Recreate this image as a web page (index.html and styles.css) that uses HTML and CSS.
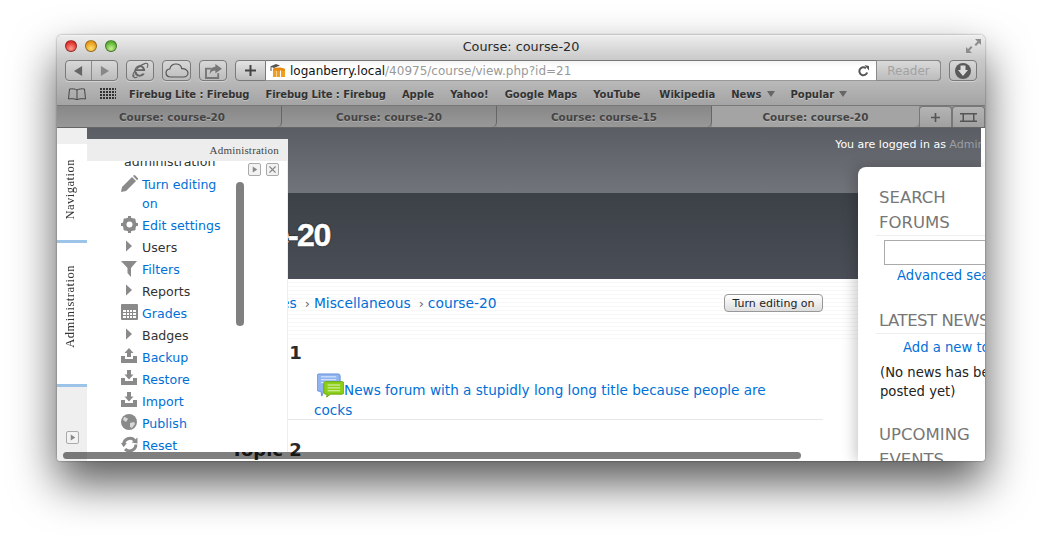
FILE: index.html
```html
<!DOCTYPE html>
<html lang="en">
<head>
<meta charset="utf-8">
<title>Course: course-20</title>
<link rel="stylesheet" href="styles.css">
</head>
<body>
<div class="window">
  <div class="chrome">
    <div class="titlebar">
      <div class="lights"><span class="light red"></span><span class="light amber"></span><span class="light green"></span></div>
      <div class="title">Course: course-20</div>
      <svg class="fullscreen" width="15" height="14" viewBox="0 0 15 14"><path d="M9 0h6v6l-2-2-3 3-1.500-1.500 3-3zM6 14H0V8l2 2 3-3 1.500 1.500-3 3z" fill="#8d8d8d"/></svg>
    </div>
    <div class="toolbar">
      <div class="btn backfwd">
        <span class="seg"><svg width="9" height="10" viewBox="0 0 10 11"><path d="M9 0v11L0 5.500z" fill="#666"/></svg></span>
        <span class="seg"><svg width="9" height="10" viewBox="0 0 10 11"><path d="M1 0v11l9-5.500z" fill="#888"/></svg></span>
      </div>
      <div class="btn ie"><svg width="19" height="17" viewBox="0 0 20 18"><path d="M4.500 9.500h10.500c0-3.500-2.500-6-5.500-6-3.300 0-6 2.800-6 6.500 0 3.300 2.500 5.500 5.700 5.500 2.500 0 4.300-1.200 5.300-3.200h-2.800c-.6.900-1.500 1.400-2.500 1.400-1.600 0-3.200-1.300-3.200-3zM5 7.700c.4-1.400 2.200-2.500 4.300-2.500 1.800 0 2.900 1.100 3.100 2.500z" fill="#666"/><path d="M2 15.500C.8 11.500 9 3 15 1.500c3-.7 3.500 1.500 2 4.500M3.200 13.500c-1.500 3 .8 3.800 3.600 2.300" fill="none" stroke="#666" stroke-width="1.200"/></svg></div>
      <div class="btn cloud"><svg width="24" height="15" viewBox="0 0 24 15"><path d="M6 14C2.500 14 1 11.800 1 9.700 1 7.500 2.800 6 4.800 6 5.500 3 8 1 11 1c3 0 5.200 2 5.800 4.600C20 5.400 23 7.300 23 10c0 2.300-2 4-4.500 4z" fill="none" stroke="#555" stroke-width="1.200"/></svg></div>
      <div class="btn share"><svg width="19" height="16" viewBox="0 0 20 17"><path d="M1 5h7v2H3v8h11v-4h2v6H1z" fill="#777"/><path d="M12 1l7 5-7 5V8C9 8 7.500 9 6 12c0-5 2-7.500 6-8z" fill="#777"/></svg></div>
      <div class="addressgroup">
        <div class="plus"><svg width="11" height="11" viewBox="0 0 11 11"><path d="M4.500 0h2v4.500H11v2H6.500V11h-2V6.500H0v-2h4.500z" fill="#444"/></svg></div>
        <div class="address">
          <svg class="favicon" width="16" height="15" viewBox="0 0 16 15"><path d="M3 6h3.500v8H3zM7 6h3v8H7zM11 6.500h4V14h-4z" fill="#f0a020"/><path d="M3 5.500c4-1.500 9-1.500 12 .5v2h-2.500V7.500H10V8H6.500V7.500H3z" fill="#e88a10"/><path d="M0 3.500L6 1l4 1.500L4 5z" fill="#555"/><path d="M1 4v4" stroke="#555"/></svg>
          <span class="host">loganberry.local</span><span class="path">/40975/course/view.php?id=21</span>
          <svg class="reload" width="11" height="12" viewBox="0 0 11 12"><path d="M9.200 7.500A4 4 0 1 1 8 3.200" fill="none" stroke="#555" stroke-width="2"/><path d="M6.500 0L11 1v4.500z" fill="#555"/></svg>
          <span class="reader">Reader</span>
        </div>
      </div>
      <div class="btn download"><svg width="18" height="18" viewBox="0 0 18 18"><circle cx="9" cy="9" r="8" fill="#5a5a5a"/><path d="M6.500 3.500h5V8H14l-5 6-5-6h2.500z" fill="#dcdcdc"/></svg></div>
    </div>
    <div class="bookmarks">
      <svg class="book" width="18" height="12" viewBox="0 0 18 12"><path d="M9 2C7 .8 4 .6 1.500 1L.5 11c3-.5 6-.4 8.500 .7 2.500-1.100 5.500-1.200 8.500-.7l-1-10C14 .6 11 .8 9 2zM9 2v9.500" fill="none" stroke="#444"/></svg>
      <span class="grid"></span>
      <a class="bm first tight">Firebug Lite : Firebug</a>
      <a class="bm tight">Firebug Lite : Firebug</a>
      <a class="bm">Apple</a>
      <a class="bm">Yahoo!</a>
      <a class="bm">Google Maps</a>
      <a class="bm">YouTube</a>
      <a class="bm wide">Wikipedia</a>
      <a class="bm bm-menu">News</a>
      <a class="bm bm-menu">Popular</a>
    </div>
    <div class="tabs">
      <div class="tab t1">Course: course-20</div>
      <div class="tab">Course: course-20</div>
      <div class="tab">Course: course-15</div>
      <div class="tab active">Course: course-20</div>
      <div class="tab small"><svg width="9" height="9" viewBox="0 0 11 11"><path d="M4.500 0h2v4.500H11v2H6.500V11h-2V6.500H0v-2h4.500z" fill="#555"/></svg></div>
      <div class="tab small"><svg width="17" height="9" viewBox="0 0 17 9"><path d="M0 0h17v1.500H0zM0 7.500h17V9H0zM2.500 1.500H4v6H2.500zM13 1.500h1.500v6H13z" fill="#555"/></svg></div>
    </div>
  </div>
  <div class="page">
    <div class="site">
      <div class="topband"><span class="login">You are logged in as <span class="admin">Admin User</span></span></div>
      <div class="headband"><h1 class="coursename">course-20</h1></div>
      <div class="main">
        <div class="navrow">
          <div class="crumbs"><a>Home</a><i>›</i><a>My courses</a><i>›</i><a>Miscellaneous</a><i>›</i><a>course-20</a></div>
          <button class="editbtn">Turn editing on</button>
        </div>
        <h2 class="topic t-one">Topic 1</h2>
        <div class="activity">
          <svg class="forum" width="27" height="25" viewBox="0 0 28 26"><path d="M2 1h20a2 2 0 0 1 2 2v14a2 2 0 0 1-2 2H7l-2 5-1-5H2a2 2 0 0 1-2-2V3a2 2 0 0 1 2-2z" fill="#8fb4f0" stroke="#6a90d8"/><path d="M4 4h16M4 7h16M4 10h16" stroke="#e6efff"/><path d="M9 9h17a2 2 0 0 1 2 2v9a2 2 0 0 1-2 2H14l-4 3 .500-3H9a2 2 0 0 1-2-2v-9a2 2 0 0 1 2-2z" fill="#8ccf18" stroke="#6ca810"/><path d="M11 12.500h13M11 15.500h13M11 18.500h13" stroke="#e8f8c8"/></svg><a>News forum with a stupidly long long title because people are cocks</a>
        </div>
        <h2 class="topic t-two">Topic 2</h2>
      </div>
    </div>

    <aside class="dock">
      <div class="dock-cap"></div>
      <div class="dock-tab nav"><span>Navigation</span></div>
      <div class="dock-tab adm"><span>Administration</span></div>
      <div class="dock-foot"><span class="mini"><svg width="6" height="7" viewBox="0 0 8 8"><path d="M1 0l6 4-6 4z" fill="#888"/></svg></span></div>
    </aside>

    <section class="panel">
      <header class="panel-head">Administration</header>
      <div class="panel-body">
        <div class="panel-clip">
          <div class="panel-tools">
            <span class="mini"><svg width="6" height="7" viewBox="0 0 8 8"><path d="M1 0l6 4-6 4z" fill="#888"/></svg></span>
            <span class="mini"><svg width="7" height="7" viewBox="0 0 8 8"><path d="M1 0l3 3 3-3 1 1-3 3 3 3-1 1-3-3-3 3-1-1 3-3-3-3z" fill="#888"/></svg></span>
          </div>
          <div class="course-admin">administration</div>
          <ul class="admin-menu">
            <li><svg width="17" height="17" viewBox="0 0 17 17"><path d="M0 17l1-5L11 2l4 4L5 16zM12 1l1-1 1 .3 3 3 0 1-1 1z" fill="#8a8a8a"/></svg><a>Turn editing on</a></li>
            <li><svg width="17" height="17" viewBox="0 0 17 17"><circle cx="8.500" cy="8.500" r="5" fill="none" stroke="#8a8a8a" stroke-width="4"/><path d="M7 0h3v3H7zM7 14h3v3H7zM0 7h3v3H0zM14 7h3v3h-3zM2 4l2-2 2 2-2 2zM11 13l2-2 2 2-2 2zM13 2l2 2-2 2-2-2zM4 11l2 2-2 2-2-2z" fill="#8a8a8a"/></svg><a>Edit settings</a></li>
            <li><svg class="arrow" width="6" height="12" viewBox="0 0 6 11"><path d="M0 0l6 5.500L0 11z" fill="#8a8a8a"/></svg><span>Users</span></li>
            <li><svg width="17" height="17" viewBox="0 0 17 17"><path d="M0 1h16l-6 7v9l-3.500-4V8z" fill="#8a8a8a"/></svg><a>Filters</a></li>
            <li><svg class="arrow" width="6" height="12" viewBox="0 0 6 11"><path d="M0 0l6 5.500L0 11z" fill="#8a8a8a"/></svg><span>Reports</span></li>
            <li><svg width="17" height="16" viewBox="0 0 17 16"><path fill-rule="evenodd" d="M1 0h15a1 1 0 0 1 1 1v14a1 1 0 0 1-1 1H1a1 1 0 0 1-1-1V1a1 1 0 0 1 1-1zM6 6v2h2V6zm3 0v2h2V6zm3 0v2h3V6zM2 6v2h3V6zm0 3v2h3V9zm4 0v2h2V9zm3 0v2h2V9zm3 0v2h3V9zm-10 3v2h3v-2zm4 0v2h2v-2zm3 0v2h2v-2zm3 0v2h3v-2z" fill="#8a8a8a"/></svg><a>Grades</a></li>
            <li><svg class="arrow" width="6" height="12" viewBox="0 0 6 11"><path d="M0 0l6 5.500L0 11z" fill="#8a8a8a"/></svg><span>Badges</span></li>
            <li><svg width="16" height="15" viewBox="0 0 16 15"><path d="M8 0l4.500 5H10v4H6V5H3.500zM0 8h4v3h8V8h4v7H0z" fill="#8a8a8a"/></svg><a>Backup</a></li>
            <li><svg width="16" height="15" viewBox="0 0 16 15"><path d="M6 0h4v4.500h2.500L8 9.500l-4.500-5H6zM0 8h4v3h8V8h4v7H0z" fill="#8a8a8a"/></svg><a>Restore</a></li>
            <li><svg width="16" height="15" viewBox="0 0 16 15"><path d="M6 0h4v4.500h2.500L8 9.500l-4.500-5H6zM0 8h4v3h8V8h4v7H0z" fill="#8a8a8a"/></svg><a>Import</a></li>
            <li><svg width="16" height="16" viewBox="0 0 16 16"><circle cx="8" cy="8" r="8" fill="#8a8a8a"/><path d="M3 3c2 0 3 1 4 2L5 8 2 6zM9 9l4-1 1 2-3 4-2-1z" fill="#d8d8d8"/></svg><a>Publish</a></li>
            <li><svg width="17" height="17" viewBox="0 0 16 16"><path d="M2.500 8a6 6 0 0 1 10.300-4M14 8A6 6 0 0 1 3.800 12.300" fill="none" stroke="#8a8a8a" stroke-width="2.800"/><path d="M0 6.500h5.500L2.500 10.500zM10 6l5.500-4.500V7z" fill="#8a8a8a"/></svg><a>Reset</a></li>
          </ul>
          <div class="panel-scroll"></div>
        </div>
      </div>
    </section>

    <aside class="rail">
      <h3 class="rail-title first-title">SEARCH FORUMS</h3>
      <input class="rail-search" type="text" aria-label="Search forums">
      <a class="rail-link adv">Advanced search</a>
      <h3 class="rail-title latest">LATEST NEWS</h3>
      <a class="rail-link add">Add a new topic</a>
      <p class="rail-text">(No news has been posted yet)</p>
      <h3 class="rail-plain">UPCOMING EVENTS</h3>
    </aside>

    <div class="hscroll"></div>
  </div>
</div>
</body>
</html>
```
FILE: styles.css
```css
* { box-sizing: border-box; }
html, body { height: 100%; }
body {
  margin: 0;
  padding: 35px 0 0 57px;
  background: #fff;
  overflow: hidden;
  font-family: "DejaVu Sans", sans-serif;
}
a { color: #0070d8; text-decoration: none; }

.window {
  width: 928px;
  height: 426px;
  display: flex;
  flex-direction: column;
  border-radius: 5px 5px 4px 4px;
  box-shadow: 0 22px 45px rgba(0,0,0,.66), 0 0 2px rgba(0,0,0,.5);
  overflow: hidden;
  background: #fff;
}

/* Browser chrome */
.chrome { flex: none; color: #333; }
.titlebar {
  height: 25px;
  display: flex;
  align-items: center;
  justify-content: center;
  position: relative;
  background: linear-gradient(#ececec, #c9c9c9);
  border-top: 1px solid #f2f2f2;
}
.lights { position: absolute; left: 8px; top: 4px; display: flex; gap: 8px; }
.light { width: 12px; height: 12px; border-radius: 50%; border: 1px solid rgba(0,0,0,.35); }
.red { background: radial-gradient(circle at 50% 75%, #ff9a90, #e0302a 70%); }
.amber { background: radial-gradient(circle at 50% 75%, #ffe070, #e89a18 70%); }
.green { background: radial-gradient(circle at 50% 75%, #c8f090, #58b030 70%); }
.title { font-size: 12.800px; color: #2a2a2a; margin-top: -4px; }
.fullscreen { position: absolute; right: 4px; top: 3px; }

.toolbar {
  height: 22px;
  display: flex;
  padding-left: 8px;
  gap: 8px;
  background: linear-gradient(#c9c9c9, #b9b9b9);
}
.btn {
  height: 21px;
  display: flex;
  align-items: center;
  justify-content: center;
  border: 1px solid #7a7a7a;
  border-radius: 4px;
  background: linear-gradient(#d8d8d8, #bcbcbc);
  box-shadow: 0 1px 0 rgba(255,255,255,.35);
}
.backfwd { width: 53px; }
.seg { flex: 1; height: 100%; display: flex; align-items: center; justify-content: center; }
.seg + .seg { border-left: 1px solid #8a8a8a; }
.ie { width: 28px; }
.cloud { width: 29px; }
.share { width: 28px; }
.download { width: 28px; }
.addressgroup { width: 706px; height: 21px; display: flex; }
.plus {
  width: 31px;
  display: flex;
  align-items: center;
  justify-content: center;
  border: 1px solid #7a7a7a;
  border-radius: 4px 0 0 4px;
  background: linear-gradient(#e4e4e4, #bcbcbc);
}
.address {
  flex: 1;
  display: flex;
  align-items: center;
  background: linear-gradient(#f4f4f4, #fff 30%);
  border-top: 1px solid #777;
  border-right: 1px solid #7a7a7a;
  border-radius: 0 4px 4px 0;
  border-bottom: 1px solid #999;
  font-size: 12px;
  padding-left: 4px;
  position: relative;
}
.favicon { margin-right: 4px; flex: none; }
.host { color: #111; }
.path { color: #999; }
.reload { margin-left: auto; margin-right: 7px; flex: none; }
.reader {
  width: 65px;
  height: 21px;
  margin: -1px -1px -1px 0;
  flex: none;
  display: flex;
  align-items: center;
  justify-content: center;
  color: #a2a2a2;
  font-size: 12px;
  background: linear-gradient(#dadada, #bcbcbc);
  border: 1px solid #8a8a8a;
  border-radius: 0 4px 4px 0;
}

.bookmarks {
  height: 24px;
  display: flex;
  align-items: center;
  padding: 1px 0 0 11px;
  background: linear-gradient(#b8b8b8, #a4a4a4);
  border-bottom: 1px solid #777;
  font-size: 10px;
  font-weight: 700;
}
.book { flex: none; margin-top: -1px; }
.grid {
  width: 16px;
  height: 12px;
  margin: -1px 13px 0 14px;
  background: repeating-linear-gradient(90deg, #333 0 2px, transparent 2px 3px);
  -webkit-mask: repeating-linear-gradient(#000 0 2px, transparent 2px 3px);
  mask: repeating-linear-gradient(#000 0 2px, transparent 2px 3px);
}
.bm { color: #333; margin-left: 16px; white-space: nowrap; text-shadow: 0 1px 0 rgba(255,255,255,.35); }
.bm.first { margin-left: 0; }
.bm.tight { letter-spacing: -.1px; }
.bm.wide { margin-left: 19px; }
.bm-menu { display: flex; align-items: center; }
.bm-menu::after {
  content: "";
  margin-left: 5px;
  border-left: 4px solid transparent;
  border-right: 4px solid transparent;
  border-top: 6px solid #666;
}

.tabs { height: 22px; display: flex; background: #8f8f8f; border-bottom: 1px solid #666; }
.tab {
  width: 215px;
  display: flex;
  align-items: center;
  justify-content: center;
  font-size: 10.400px;
  font-weight: 700;
  color: #444;
  background: linear-gradient(#888, #989898);
  border-right: 1px solid #666;
  border-radius: 0 0 5px 0;
  text-shadow: 0 1px 0 rgba(255,255,255,.25);
}
.t1 { width: 225px; padding-left: 6px; }
.tab.active { width: 207px; background: #a4a4a4; border-right: 0; }
.tab.small { width: 33px; background: linear-gradient(#b4b4b4, #a0a0a0); border: 1px solid #777; border-bottom: 0; border-radius: 4px 4px 0 0; }

/* Page */
.page { flex: 1; position: relative; overflow: hidden; background: #fff; }
.site { margin-left: 30px; width: 894px; height: 100%; display: flex; flex-direction: column; }
.topband {
  height: 65px;
  flex: none;
  background: linear-gradient(#5a5e64, #71747a);
  display: flex;
  justify-content: flex-end;
  padding-top: 10px;
  font-size: 11px;
  color: #fff;
  white-space: nowrap;
  overflow: hidden;
}
.login { margin-right: -32px; }
.admin { color: #9b9ea4; }
.headband {
  height: 86px;
  flex: none;
  background: linear-gradient(#3c4148, #4a4e56);
  padding: 24px 0 0 105px;
}
.coursename {
  margin: 0;
  font: 700 32px/36px "Liberation Sans", sans-serif;
  letter-spacing: -1.5px;
  color: #fff;
  -webkit-text-stroke: .5px #fff;
  text-shadow: 0 0 2px #000;
}
.main {
  flex: 1;
  position: relative;
  padding-right: 158px;
  padding-left: 87px;
  background: repeating-linear-gradient(#fff 0 3px, #f8f8f8 3px 4px) 0 0 / 100% 60px no-repeat;
}
.navrow { height: 48px; display: flex; align-items: center; justify-content: space-between; }
.crumbs { font-size: 13.800px; white-space: nowrap; margin-left: -13px; }
.crumbs i { font-style: normal; color: #666; margin: 0 4px 0 8px; font-size: 13px; }
.editbtn {
  width: 99px;
  height: 18px;
  padding: 0;
  font: 11px "DejaVu Sans", sans-serif;
  color: #222;
  background: linear-gradient(#fff, #ddd);
  border: 1px solid #999;
  border-radius: 4px;
}
.topic { margin: 0; font-size: 18px; line-height: 22px; color: #2a2a2a; font-weight: 700; white-space: nowrap; }
.t-one { padding-left: 57px; margin-top: 15px; }
.activity {
  margin-top: 9px;
  padding: 0 15px 0 140px;
  height: 47px;
  font-size: 13.600px;
  line-height: 20px;
  border-bottom: 1px solid #e8e8e8;
}
.forum { vertical-align: -3px; margin-left: 3px; }
.t-two { padding-left: 57px; margin-top: 19px; }

/* Dock */
.dock { position: absolute; left: 0; top: 0; bottom: 0; width: 30px; display: flex; flex-direction: column; background: #efefef; }
.dock-cap { height: 16px; flex: none; }
.dock-tab { background: #fff; display: flex; align-items: center; justify-content: center; border-bottom: 3px solid #9cc4e8; flex: none; padding-right: 4px; }
.dock-tab span { writing-mode: vertical-rl; transform: rotate(180deg); font: 12.500px "Liberation Serif", serif; color: #333; letter-spacing: .5px; }
.nav { height: 99px; padding-bottom: 6px; }
.adm { height: 144px; padding-bottom: 14px; }
.dock-foot { flex: 1; padding: 44px 0 0 9px; }
.mini {
  width: 13px;
  height: 13px;
  display: flex;
  align-items: center;
  justify-content: center;
  border: 1px solid #aaa;
  border-radius: 2px;
  background: #f2f2f2;
}

/* Panel */
.panel { position: absolute; left: 30px; top: 11px; width: 201px; height: 313px; display: flex; flex-direction: column; background: #fff; border-right: 1px solid #eee; }
.panel-head { height: 22px; flex: none; background: #ededed; font: 11px/23px "Liberation Serif", serif; color: #444; text-align: right; padding-right: 8px; letter-spacing: .2px; }
.panel-body { flex: 1; overflow: hidden; }
.panel-clip { display: flow-root; height: 100%; position: relative; padding-left: 34px; }
.course-admin { font-size: 12.600px; line-height: 15px; margin: -7px 0 0 3px; color: #333; }
.panel-tools { position: absolute; left: 161px; top: 2px; display: flex; gap: 5px; }
.admin-menu { list-style: none; margin: 3px 0 0; padding: 0; font-size: 12.600px; line-height: 19px; width: 104px; }
.admin-menu li { padding: 3px 0 0 21px; position: relative; }
.admin-menu li svg { position: absolute; left: 0; top: 3px; }
.admin-menu li .arrow { left: 5px; top: 5px; }
.admin-menu li span { color: #333; }
.panel-scroll { position: absolute; left: 149px; top: 21px; width: 8px; height: 144px; border-radius: 4px; background: #808080; }

/* Right rail */
.rail { position: absolute; left: 801px; top: 39px; right: 0; bottom: 0; background: #fff; border-radius: 8px 0 0 0; box-shadow: -3px 0 14px rgba(0,0,0,.22); padding: 18px 0 0 21px; white-space: nowrap; overflow: hidden; }
.rail-title { margin: 0 0 0 -3px; font-size: 16.500px; line-height: 25px; font-weight: 400; color: #777; padding-left: 3px; border-bottom: 1px solid #eee; white-space: nowrap; width: 130px; }
.first-title { white-space: normal; }
.rail-search { display: block; width: 120px; height: 25px; margin: 4px 0 0 5px; border: 1px solid #aaa; padding: 0; background: #fff; }
.rail-link { display: block; font-size: 13.200px; line-height: 20px; }
.adv { margin: 1px 0 0 18px; }
.latest { margin-top: 22px; letter-spacing: -.5px; }
.add { margin: 4px 0 0 24px; }
.rail-text { margin: 5px 0 0 1px; font-size: 13.200px; line-height: 19px; color: #222; width: 135px; white-space: normal; }
.rail-plain { margin: 21px 0 0; font-size: 16.500px; line-height: 25px; font-weight: 400; color: #777; white-space: normal; width: 100px; }

.hscroll { position: absolute; left: 6px; bottom: 2px; width: 738px; height: 7px; border-radius: 4px; background: rgba(0,0,0,.5); }
```
